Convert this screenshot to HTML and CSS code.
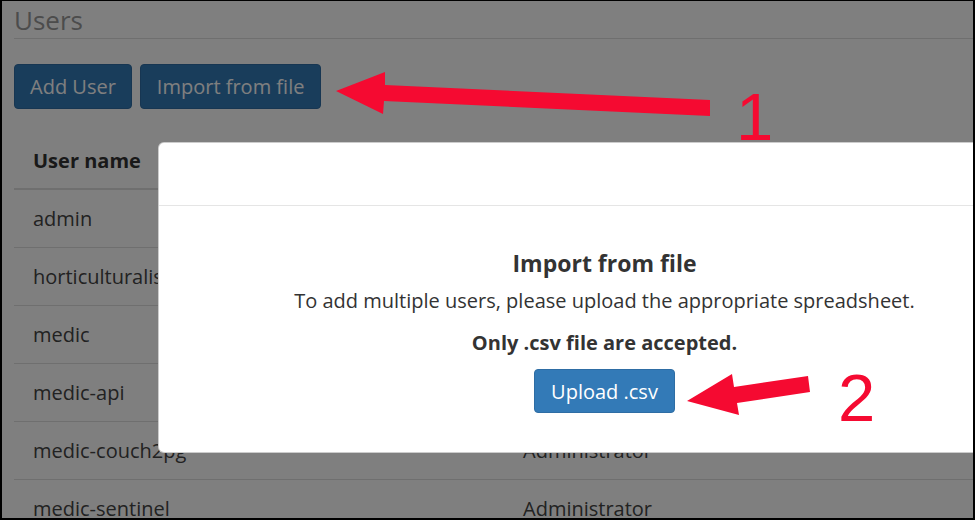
FILE: index.html
```html
<!DOCTYPE html>
<html lang="en">
<head>
<meta charset="utf-8">
<title>Users</title>
<link rel="stylesheet" href="styles.css">
</head>
<body>
<div class="frame">
  <div class="page">
    <h1 class="title">Users</h1>
    <div class="actions">
      <button class="btn">Add User</button>
      <button class="btn btn-wide">Import from file</button>
    </div>
    <div class="table">
      <div class="row head"><div class="cell">User name</div><div class="cell">Roles</div></div>
      <div class="row"><div class="cell">admin</div><div class="cell">Administrator</div></div>
      <div class="row"><div class="cell">horticulturalist</div><div class="cell">Administrator</div></div>
      <div class="row"><div class="cell">medic</div><div class="cell">Administrator</div></div>
      <div class="row"><div class="cell">medic-api</div><div class="cell">Administrator</div></div>
      <div class="row"><div class="cell">medic-couch2pg</div><div class="cell">Administrator</div></div>
      <div class="row"><div class="cell">medic-sentinel</div><div class="cell">Administrator</div></div>
    </div>
  </div>
  <div class="backdrop"></div>
  <div class="modal">
    <div class="modal-header"></div>
    <div class="modal-body">
      <h2 class="modal-title">Import from file</h2>
      <p class="modal-text">To add multiple users, please upload the appropriate spreadsheet.</p>
      <p class="modal-note">Only .csv file are accepted.</p>
      <button class="btn-upload">Upload .csv</button>
    </div>
  </div>
  <svg class="arrows" width="975" height="520" viewBox="0 0 975 520">
    <polygon fill="#f50a31" points="336,91 385,72 385,85 710,100 710,116 384,101 383,114"/>
    <polygon fill="#f50a31" points="687,401 732,374 734,387 808,376 810,392 737,403 739,415"/>
  </svg>
  <div class="num num-1">1</div>
  <div class="num num-2">2</div>
</div>
</body>
</html>
```

FILE: styles.css
```css
* { box-sizing: border-box; }

html, body {
  margin: 0;
  padding: 0;
  width: 975px;
  height: 520px;
  overflow: hidden;
  background: #000;
}

.frame {
  position: relative;
  width: 975px;
  height: 520px;
  border-style: solid;
  border-color: #000;
  border-width: 1px 2px 2px 2px;
  background: #fff;
  overflow: hidden;
  font-family: "Open Sans", "Noto Sans", sans-serif;
  color: #333;
}

.page {
  padding-left: 12px;
}

.title {
  margin: 4px 0 0 0;
  padding: 0 0 3px 0;
  font-size: 26px;
  line-height: 30px;
  font-weight: 400;
  color: #999;
  border-bottom: 1px solid #dedede;
}

.actions {
  display: flex;
  gap: 8px;
  margin-top: 25px;
}

.btn {
  height: 45px;
  padding: 0 15px;
  font-family: inherit;
  font-size: 20px;
  color: #fff;
  background: #337ab7;
  border: 1px solid #2e6da4;
  border-radius: 4px;
}

.btn-wide {
  padding: 0 16px;
}

.table {
  margin-top: 23px;
}

.row {
  display: grid;
  grid-template-columns: 490px 1fr;
  height: 58px;
  border-bottom: 1px solid #dedede;
  align-items: center;
  font-size: 20px;
  color: #444;
}

.row.head {
  border-bottom: 2px solid #dedede;
  font-weight: 700;
  color: #333;
}

.cell {
  padding: 0 19px;
  white-space: nowrap;
}

.backdrop {
  position: absolute;
  inset: 0;
  background: rgba(0, 0, 0, 0.5);
}

.modal {
  position: absolute;
  left: 156px;
  top: 141px;
  width: 893px;
  background: #fff;
  border: 1px solid rgba(0, 0, 0, 0.2);
  border-radius: 6px;
}

.modal-header {
  height: 63px;
  border-bottom: 1px solid #e5e5e5;
}

.modal-body {
  display: flex;
  flex-direction: column;
  align-items: center;
  padding: 42px 0 39px 0;
  color: #333;
}

.modal-title {
  margin: 0;
  font-size: 23px;
  line-height: 30px;
  font-weight: 700;
}

.modal-text {
  margin: 9px 0 0 0;
  font-size: 20px;
  line-height: 28px;
}

.modal-note {
  margin: 14px 0 0 0;
  font-size: 20px;
  line-height: 28px;
  font-weight: 700;
}

.btn-upload {
  margin-top: 12px;
  height: 44px;
  padding: 0 16px;
  font-family: inherit;
  font-size: 20px;
  color: #fff;
  background: #337ab7;
  border: 1px solid #2e6da4;
  border-radius: 4px;
}

.arrows {
  position: absolute;
  left: -2px;
  top: -1px;
}

.num {
  position: absolute;
  font-family: "Liberation Sans", Arial, sans-serif;
  font-size: 67px;
  line-height: 1;
  color: #f50a31;
}

.num-1 { left: 734px; top: 82px; }
.num-2 { left: 836px; top: 363px; }
```
